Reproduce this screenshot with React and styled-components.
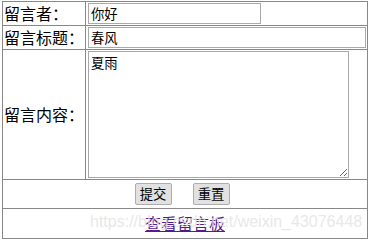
import styled, { createGlobalStyle } from "styled-components"

const GlobalStyle = createGlobalStyle`
body {
  margin: 0;
  background: #fff;
  font-family: "Microsoft YaHei", "Noto Sans CJK SC", sans-serif;
}
`

const Page = styled.div`
  position: relative;
  padding: 1px 0 0 2px;
  width: 371px;
  height: 244px;
  box-sizing: border-box;
`

const Table = styled.table`
  width: 366px;
  border-collapse: collapse;
  border-top: 1px solid #888;
  border-bottom: 1px solid #777;
  border-left: 1px solid #222;
  border-right: 1px solid #222;
`

const Cell = styled.td`
  border: 1px solid #888;
  padding: 1px;
  font-size: 16px;
  line-height: 21px;
  color: #000;
  vertical-align: middle;
  text-align: ${(p) => (p.$center ? "center" : "left")};
  height: ${(p) => (p.$h ? p.$h + "px" : "auto")};
`

const Label = styled(Cell)`
  width: 80px;
  white-space: nowrap;
`

const TextInput = styled.input`
  display: block;
  box-sizing: border-box;
  width: ${(p) => p.$w}px;
  height: 21px;
  margin: 0 0 0 1px;
  padding: 1px 2px;
  border: 1px solid #a9a9a9;
  font-family: "Microsoft YaHei", "Noto Sans CJK SC", sans-serif;
  font-size: 13.33px;
  color: #000;
  outline: none;
`

const TextArea = styled.textarea`
  display: block;
  box-sizing: border-box;
  width: 261px;
  height: 127px;
  margin: 0 0 0 1px;
  padding: 2px 2px;
  border: 1px solid #a9a9a9;
  font-family: "Microsoft YaHei", "Noto Sans CJK SC", sans-serif;
  font-size: 13.33px;
  line-height: 17px;
  color: #000;
  resize: both;
  outline: none;
`

const ButtonRow = styled.div`
  display: flex;
  justify-content: center;
  gap: 21px;
  padding-right: 6px;
`

const Button = styled.button`
  box-sizing: border-box;
  width: 37px;
  height: 22px;
  padding: 0;
  border: 1px solid #adadad;
  border-radius: 2px;
  background: #e1e1e1;
  font-family: "Microsoft YaHei", "Noto Sans CJK SC", sans-serif;
  font-size: 13.33px;
  line-height: 18px;
  color: #000;
`

const Link = styled.a`
  color: #551a8b;
  text-decoration: underline;
  font-size: 16px;
`

const Watermark = styled.div`
  position: absolute;
  left: 90px;
  top: 212px;
  font-family: "Liberation Sans", Arial, sans-serif;
  font-size: 16px;
  line-height: 20px;
  color: rgba(228, 228, 228, 0.85);
  white-space: nowrap;
  pointer-events: none;
`

const App = () => {
  return (
    <>
      <GlobalStyle />
      <Page>
        <form onSubmit={(e) => e.preventDefault()}>
          <Table>
            <tbody>
              <tr>
                <Label>留言者：</Label>
                <Cell>
                  <TextInput $w={173} defaultValue="你好" />
                </Cell>
              </tr>
              <tr>
                <Label>留言标题：</Label>
                <Cell>
                  <TextInput $w={278} defaultValue="春风" />
                </Cell>
              </tr>
              <tr>
                <Label>留言内容：</Label>
                <Cell>
                  <TextArea defaultValue="夏雨" />
                </Cell>
              </tr>
              <tr>
                <Cell colSpan={2} $h={26}>
                  <ButtonRow>
                    <Button type="submit">提交</Button>
                    <Button type="reset">重置</Button>
                  </ButtonRow>
                </Cell>
              </tr>
              <tr>
                <Cell colSpan={2} $center $h={27}>
                  <Link href="#">查看留言板</Link>
                </Cell>
              </tr>
            </tbody>
          </Table>
        </form>
        <Watermark>https://blog.csdn.net/weixin_43076448</Watermark>
      </Page>
    </>
  )
}

export default App
